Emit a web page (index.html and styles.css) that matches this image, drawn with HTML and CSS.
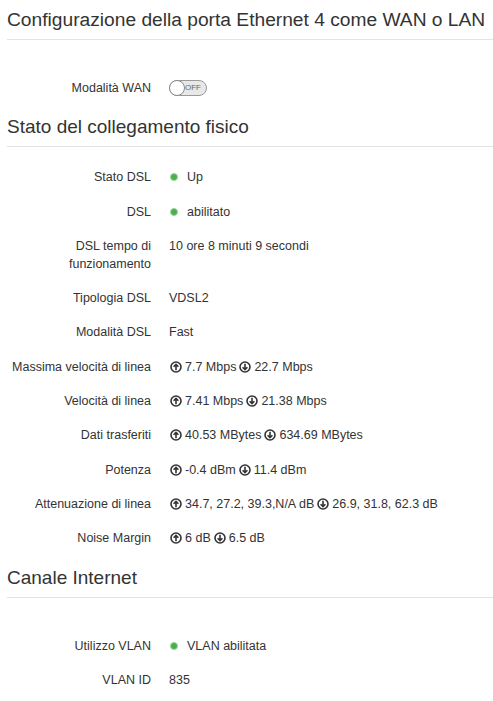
FILE: index.html
```html
<!DOCTYPE html>
<html lang="it">
<head>
<meta charset="utf-8">
<title>Configurazione</title>
<link rel="stylesheet" href="styles.css">
</head>
<body>
<div class="page">
  <h2 class="section-title first">Configurazione della porta Ethernet 4 come WAN o LAN</h2>
  <div class="section spaced">
    <div class="row">
      <div class="label">Modalità WAN</div>
      <div class="value">
        <span class="toggle"><span class="knob"></span><span class="toggle-text">OFF</span></span>
      </div>
    </div>
  </div>

  <h2 class="section-title">Stato del collegamento fisico</h2>
  <div class="section">
    <div class="row"><div class="label">Stato DSL</div><div class="value"><span class="dot"></span>Up</div></div>
    <div class="row"><div class="label">DSL</div><div class="value"><span class="dot"></span>abilitato</div></div>
    <div class="row"><div class="label">DSL tempo di funzionamento</div><div class="value">10 ore 8 minuti 9 secondi</div></div>
    <div class="row"><div class="label">Tipologia DSL</div><div class="value">VDSL2</div></div>
    <div class="row"><div class="label">Modalità DSL</div><div class="value">Fast</div></div>
    <div class="row"><div class="label">Massima velocità di linea</div><div class="value">
      <svg class="ic" viewBox="0 0 12 12"><circle cx="6" cy="6" r="5" /><path d="M6 9.2V3.4M3.6 5.8L6 3.4L8.4 5.8"/></svg>7.7 Mbps
      <svg class="ic dn" viewBox="0 0 12 12"><circle cx="6" cy="6" r="5" /><path d="M6 2.8V8.6M3.6 6.2L6 8.6L8.4 6.2"/></svg>22.7 Mbps</div></div>
    <div class="row"><div class="label">Velocità di linea</div><div class="value">
      <svg class="ic" viewBox="0 0 12 12"><circle cx="6" cy="6" r="5" /><path d="M6 9.2V3.4M3.6 5.8L6 3.4L8.4 5.8"/></svg>7.41 Mbps
      <svg class="ic dn" viewBox="0 0 12 12"><circle cx="6" cy="6" r="5" /><path d="M6 2.8V8.6M3.6 6.2L6 8.6L8.4 6.2"/></svg>21.38 Mbps</div></div>
    <div class="row"><div class="label">Dati trasferiti</div><div class="value">
      <svg class="ic" viewBox="0 0 12 12"><circle cx="6" cy="6" r="5" /><path d="M6 9.2V3.4M3.6 5.8L6 3.4L8.4 5.8"/></svg>40.53 MBytes
      <svg class="ic dn" viewBox="0 0 12 12"><circle cx="6" cy="6" r="5" /><path d="M6 2.8V8.6M3.6 6.2L6 8.6L8.4 6.2"/></svg>634.69 MBytes</div></div>
    <div class="row"><div class="label">Potenza</div><div class="value">
      <svg class="ic" viewBox="0 0 12 12"><circle cx="6" cy="6" r="5" /><path d="M6 9.2V3.4M3.6 5.8L6 3.4L8.4 5.8"/></svg>-0.4 dBm
      <svg class="ic dn" viewBox="0 0 12 12"><circle cx="6" cy="6" r="5" /><path d="M6 2.8V8.6M3.6 6.2L6 8.6L8.4 6.2"/></svg>11.4 dBm</div></div>
    <div class="row"><div class="label">Attenuazione di linea</div><div class="value">
      <svg class="ic" viewBox="0 0 12 12"><circle cx="6" cy="6" r="5" /><path d="M6 9.2V3.4M3.6 5.8L6 3.4L8.4 5.8"/></svg>34.7, 27.2, 39.3,N/A dB
      <svg class="ic dn" viewBox="0 0 12 12"><circle cx="6" cy="6" r="5" /><path d="M6 2.8V8.6M3.6 6.2L6 8.6L8.4 6.2"/></svg>26.9, 31.8, 62.3 dB</div></div>
    <div class="row"><div class="label">Noise Margin</div><div class="value">
      <svg class="ic" viewBox="0 0 12 12"><circle cx="6" cy="6" r="5" /><path d="M6 9.2V3.4M3.6 5.8L6 3.4L8.4 5.8"/></svg>6 dB
      <svg class="ic dn" viewBox="0 0 12 12"><circle cx="6" cy="6" r="5" /><path d="M6 2.8V8.6M3.6 6.2L6 8.6L8.4 6.2"/></svg>6.5 dB</div></div>
  </div>

  <h2 class="section-title">Canale Internet</h2>
  <div class="section spaced">
    <div class="row"><div class="label">Utilizzo VLAN</div><div class="value"><span class="dot"></span>VLAN abilitata</div></div>
    <div class="row"><div class="label">VLAN ID</div><div class="value">835</div></div>
  </div>
</div>
</body>
</html>
```

FILE: styles.css
```css
html, body {
  margin: 0;
  padding: 0;
  background: #ffffff;
}

body {
  font-family: "Liberation Sans", Arial, sans-serif;
  color: #333333;
}

.page {
  padding: 6px 0 0 7px;
}

.section-title {
  margin: 0;
  padding: 3px 0 8px 0;
  font-size: 19px;
  line-height: 22px;
  font-weight: normal;
  color: #333333;
  border-bottom: 1px solid #e3e3e3;
}

.section-title.first {
  font-size: 19.2px;
}

.section {
  padding-top: 21px;
}

.section.spaced {
  padding-top: 39px;
}

.row {
  display: flex;
  align-items: flex-start;
  margin-bottom: 16.3px;
  font-size: 12.5px;
  line-height: 18px;
}

.label {
  flex: 0 0 144px;
  text-align: right;
}

.value {
  flex: 1 1 auto;
  margin-left: 18px;
  display: flex;
  align-items: center;
  white-space: nowrap;
}

.dot {
  width: 6px;
  height: 6px;
  border-radius: 50%;
  background: #4cae4c;
  border: 1px solid #9ad49a;
  margin: 0 9px 0 1px;
  flex: 0 0 auto;
}

.ic {
  width: 12px;
  height: 12px;
  flex: 0 0 auto;
  margin: 0 3px 0 1px;
  fill: none;
  stroke: #333333;
  stroke-width: 1.6;
  stroke-linecap: butt;
}

.ic.dn {
  margin-left: 3px;
}

.toggle {
  position: relative;
  display: inline-block;
  width: 36px;
  height: 14px;
  border: 1px solid #9a9a9a;
  border-radius: 8px;
  background: #e8e8e8;
  margin-top: 1px;
}

.knob {
  position: absolute;
  left: -1px;
  top: -1px;
  width: 14px;
  height: 14px;
  border-radius: 50%;
  background: #ffffff;
  border: 1px solid #8a8a8a;
}

.toggle-text {
  position: absolute;
  right: 5px;
  top: 0;
  font-size: 8px;
  line-height: 14px;
  color: #666666;
}
```
